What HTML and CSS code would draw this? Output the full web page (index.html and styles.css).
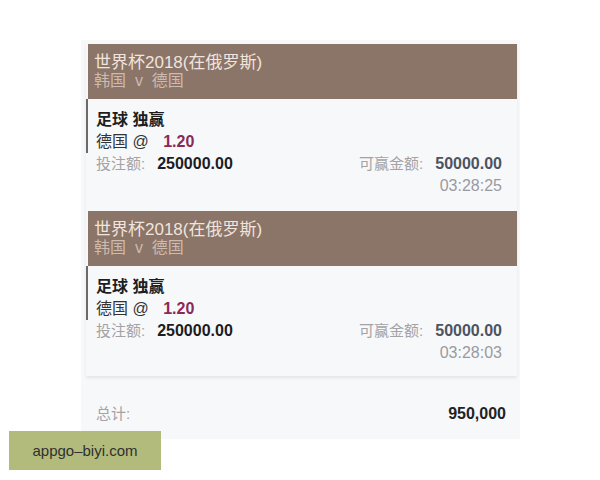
FILE: index.html
```
<!DOCTYPE html>
<html lang="zh-CN">
<head>
	<meta charset="UTF-8">
	<title>投注记录</title>
	<link rel="stylesheet" href="styles.css">
</head>
<body>

	<div class="panel">
		<div class="bets">
			<div class="card">
				<div class="card_head">
					<p class="league">世界杯2018(在俄罗斯)</p>
					<p class="match">韩国 &nbsp;v&nbsp; 德国</p>
				</div>
				<div class="pick">
					<p class="market">足球 独赢</p>
					<p class="selection">德国 @ <span class="odds">1.20</span></p>
				</div>
				<div class="amounts">
					<p><span class="label">投注额:</span><span class="stake">250000.00</span></p>
					<p><span class="label">可赢金额:</span><span class="win">50000.00</span></p>
				</div>
				<p class="time">03:28:25</p>
			</div>

			<div class="card">
				<div class="card_head">
					<p class="league">世界杯2018(在俄罗斯)</p>
					<p class="match">韩国 &nbsp;v&nbsp; 德国</p>
				</div>
				<div class="pick">
					<p class="market">足球 独赢</p>
					<p class="selection">德国 @ <span class="odds">1.20</span></p>
				</div>
				<div class="amounts">
					<p><span class="label">投注额:</span><span class="stake">250000.00</span></p>
					<p><span class="label">可赢金额:</span><span class="win">50000.00</span></p>
				</div>
				<p class="time">03:28:03</p>
			</div>
		</div>

		<div class="total">
			<span class="label">总计:</span>
			<span class="sum">950,000</span>
		</div>
	</div>

	<div class="watermark">appgo–biyi.com</div>

</body>
</html>
```
FILE: styles.css
```
body{
	margin: 0;
	background: #ffffff;
	font-family: "Liberation Sans", "Noto Sans CJK SC", sans-serif;
	color: #222;
}
p{
	margin: 0;
}
.panel{
	margin: 40px 0 0 81px;
	width: 439px;
	height: 399px;
	background: #f7f8fa;
	padding-top: 4px;
	box-sizing: border-box;
}
.bets{
	margin-left: 5px;
	width: 431px;
	box-shadow: 0 2px 3px rgba(0,0,0,.08);
	padding-bottom: 12px;
}
.card + .card{
	margin-top: 14px;
}
.card_head{
	margin-left: 2px;
	background: #8b7468;
	padding: 10px 6px 9px;
	line-height: 18px;
	font-size: 17px;
}
.league{
	color: #f1e4dc;
}
.match{
	color: #cdbab0;
	font-size: 16px;
}
.pick{
	border-left: 2px solid #6f6a66;
	padding: 10px 15px 0 8px;
}
.pick p, .amounts p, .time{
	line-height: 22px;
	font-size: 15px;
}
.pick .market{
	font-weight: bold;
	font-size: 16px;
	color: #1e1e1e;
}
.pick .selection{
	font-size: 16px;
	color: #333;
}
.odds{
	margin-left: 10px;
	font-weight: bold;
	font-size: 16px;
	color: #8a2a58;
}
.amounts{
	display: flex;
	justify-content: space-between;
	padding: 0 15px 0 10px;
}
.label{
	color: #a3a3a6;
	margin-right: 12px;
}
.stake{
	font-weight: bold;
	font-size: 16px;
	color: #1c1c22;
}
.win{
	font-weight: bold;
	font-size: 16px;
	color: #4d5360;
}
.time{
	text-align: right;
	padding-right: 15px;
	color: #9a9a9e;
	font-size: 16px !important;
}
.total{
	display: flex;
	justify-content: space-between;
	align-items: center;
	padding: 27px 14px 0 15px;
	line-height: 22px;
	font-size: 15px;
}
.sum{
	font-weight: bold;
	font-size: 16px;
	color: #222;
}
.watermark{
	position: absolute;
	left: 9px;
	top: 431px;
	width: 152px;
	height: 39px;
	background: #b2bb7c;
	color: #2e3130;
	font-size: 15px;
	line-height: 39px;
	text-align: center;
}
```
